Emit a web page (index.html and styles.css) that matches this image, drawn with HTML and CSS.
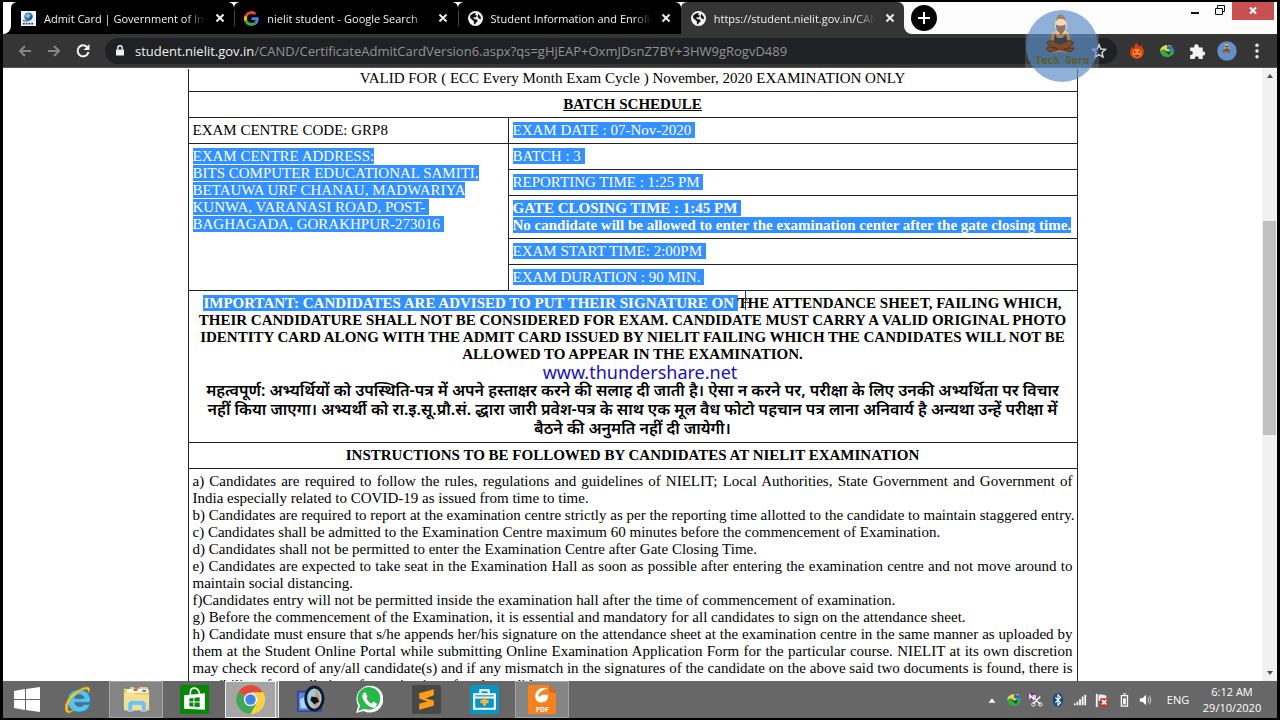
FILE: index.html
```html
<!DOCTYPE html>
<html lang="en">
<head>
<meta charset="utf-8">
<title>Admit Card</title>
<link rel="stylesheet" href="styles.css">
</head>
<body>
<svg class="defs" aria-hidden="true">
  <symbol id="globe" viewBox="0 0 14 14"><circle cx="7" cy="7" r="7" fill="#f4f4f4"/><path d="M2 4.500C3 3 5 1.500 7.500 1.800L6.500 3.500 8.500 4.500 7 6 5 5.800 5.500 7.500 8.500 8 9 9.500 7 11.500 6.500 12.500 5.500 12 5.500 9.500 2 6.500ZM9.500 2.500 12 5.500 11.800 8 10 7 9 5.500Z" fill="#111"/></symbol>
  <symbol id="idm" viewBox="0 0 16 14"><ellipse cx="8" cy="7" rx="7" ry="6" fill="#2b8fc0"/><path d="M1 6C3 1 9 0 13 2L10 7 4 8Z" fill="#efd548"/><path d="M8 1 14 3 12 6 8 5Z" fill="#3763b5"/><path d="M1 7 5 5 8 8 13 6 15 10 9 13 4 12Z" fill="#39a935"/><path d="M5 6 9 8 12 7 10 11Z" fill="#174c25"/></symbol>
  <symbol id="sage" viewBox="0 0 74 74"><circle cx="37" cy="37" r="36" fill="#6190ca"/><g transform="translate(6 2) scale(.8)"><path d="M26 28Q37 18 48 28L51 46 47 52H27L23 46Z" fill="#d9a467"/><path d="M30 27 35 42 43 28 48 46H27Z" fill="#77513f"/><path d="M30 20Q30 6 37 6T45 20L42 28H33Z" fill="#ecc9a6"/><path d="M31 17Q37 20 43 17L43 23 38 30 32 24Z" fill="#5a3c2e"/><path d="M31 13Q32 4 37 4T44 13L40 10H34Z" fill="#765039"/><path d="M20 39Q25 34 36 42 48 34 53 39L50 45 41 48 53 46Q56 47 49 51L36 48 24 51Q17 48 21 45L33 47 22 43Z" fill="#a5602a" stroke="#4c352c"/><path d="M29 31 34 34 41 33 45 31 43 40H31Z" fill="#374f70"/></g></symbol>
</svg>
<div class="window">
  <header class="tabstrip">
    <div class="lead"></div>
    <nav class="tabs">
      <div class="tab"><svg class="favicon" viewBox="0 0 16 16"><path fill="#eef3f7" d="M0 0h16v16H0z"/><circle cx="8" cy="6" r="4.500" fill="#2670a8"/><path d="M4 5 8 2 10 5 7 8Z" fill="#83bfd9"/><path d="M2 10q7 3 10-5" stroke="#254978" fill="none"/><path d="M2 13.500h12" stroke="#29435c" stroke-width="2" stroke-dasharray="2 1"/></svg><span class="title">Admit Card | Government of India</span><button class="x" aria-label="Close tab"></button></div>
      <div class="tab"><svg class="favicon" viewBox="0 0 48 48"><path fill="#ea4335" d="M24 9.500c3.500 0 6.700 1.200 9.200 3.600l6.900-6.900A24 24 0 0 0 2.600 13.200l8 6.200A14.300 14.300 0 0 1 24 9.500z"/><path fill="#4285f4" d="M47 24.600c0-1.600-.2-3.100-.4-4.600H24v9h12.900a11 11 0 0 1-4.700 7.200l7.700 6C44.400 38 47 31.900 47 24.600z"/><path fill="#fbbc05" d="M10.500 28.600a14.500 14.500 0 0 1 0-9.200l-8-6.200a24 24 0 0 0 0 21.600z"/><path fill="#34a853" d="M24 48c6.500 0 11.900-2.100 15.900-5.800l-7.700-6A14.300 14.300 0 0 1 10.500 28.600l-8 6.200A24 24 0 0 0 24 48z"/></svg><span class="title">nielit student - Google Search</span><button class="x" aria-label="Close tab"></button></div>
      <div class="tab"><svg class="favicon"><use href="#globe"/></svg><span class="title">Student Information and Enrollm</span><button class="x" aria-label="Close tab"></button></div>
      <div class="tab active"><svg class="favicon"><use href="#globe"/></svg><span class="title">https://student.nielit.gov.in/CAN</span><button class="x" aria-label="Close tab"></button></div>
    </nav>
    <div class="caption">
      <button class="newtab" aria-label="New tab"><svg viewBox="0 0 26 26"><circle cx="13" cy="13" r="13"/><path d="M13 7v12M7 13h12" stroke="#fff" stroke-width="2"/></svg></button>
      <div class="controls">
        <button aria-label="Minimize"><svg viewBox="0 0 24 18"><path d="M7 11h8" stroke="#111" stroke-width="2"/></svg></button>
        <button aria-label="Restore"><svg viewBox="0 0 24 18"><path d="M7.500 6.500h7v6h-7zM9.500 6V3.500h7v6H15" fill="none" stroke="#111"/></svg></button>
        <button class="close" aria-label="Close"><svg viewBox="0 0 42 18"><path d="m18 5.500 6 6m0-6-6 6" stroke="#fff" stroke-width="2"/></svg></button>
      </div>
    </div>
  </header>
  <div class="toolbar">
    <button aria-label="Back"><svg viewBox="0 0 16 16"><path d="M14 8H3m5-5L3 8l5 5" fill="none" stroke="#858585" stroke-width="2"/></svg></button>
    <button aria-label="Forward"><svg viewBox="0 0 16 16"><path d="M2 8h11M8 3l5 5-5 5" fill="none" stroke="#858585" stroke-width="2"/></svg></button>
    <button aria-label="Reload"><svg viewBox="0 0 16 16"><path d="M12.500 4.500A5.500 5.500 0 1 0 13.500 9" fill="none" stroke="#f4f4f4" stroke-width="2"/><path d="M14.500 1v6H8.500z" fill="#f4f4f4"/></svg></button>
    <div class="address">
      <svg class="lock" viewBox="0 0 10 12"><path d="M1 5h8v6H1z" fill="#eee"/><path d="M2.800 5V3.500a2.200 2.200 0 0 1 4.400 0V5" stroke="#eee" stroke-width="1.400" fill="none"/></svg>
      <div class="url"><b>student.nielit.gov.in</b>/CAND/CertificateAdmitCardVersion6.aspx?qs=gHjEAP+OxmJDsnZ7BY+3HW9gRogvD489</div>
      <button class="star" aria-label="Bookmark"><svg viewBox="0 0 14 14"><path d="m7 1.500 1.600 3.700 4 .4-3 2.700.9 4L7 10.200l-3.500 2.100.9-4-3-2.700 4-.4z" fill="none" stroke="#d5d5d5" stroke-width="1.300"/></svg></button>
    </div>
    <div class="extensions">
      <button aria-label="Flame"><svg viewBox="0 0 14 14"><path d="M7 0Q8 3 10 3L11 1Q11 4 13 6 14 13 7 14 0 13 1 7 1 5 3 3 3 5 5 4 4 1 7 0Z" fill="#d63b1e"/><ellipse cx="7" cy="9" rx="4" ry="4" fill="#ff8618"/><path d="M5 7v2m4-2v2m-4 2q2 1 4 0" stroke="#702308"/></svg></button>
      <button aria-label="Download manager"><svg><use href="#idm"/></svg></button>
      <button aria-label="Extensions"><svg viewBox="0 0 14 14"><path d="M1 4h3.500V3a2 2 0 0 1 4 0v1H12v3.500h.5a1.700 1.700 0 0 1 0 3.400H12V14H8.500v-.8a1.700 1.700 0 0 0-3.400 0v.8H1v-3.500h.7a1.700 1.700 0 0 0 0-3.400H1z" fill="#f6f6f6"/></svg></button>
      <button aria-label="Profile"><svg class="avatar"><use href="#sage"/></svg></button>
      <button aria-label="Menu"><svg viewBox="0 0 14 14"><circle cx="7" cy="2" r="1.500" fill="#eee"/><circle cx="7" cy="7" r="1.500" fill="#eee"/><circle cx="7" cy="12" r="1.500" fill="#eee"/></svg></button>
    </div>
  </div>
  <div class="viewport">
    <main>
      <table>
        <colgroup><col class="col-left"><col></colgroup>
        <tbody>
        <tr><td colspan="2" class="center">VALID FOR ( ECC Every Month Exam Cycle ) November, 2020 EXAMINATION ONLY</td></tr>
        <tr><th colspan="2"><u>BATCH SCHEDULE</u></th></tr>
        <tr><td>EXAM CENTRE CODE: GRP8</td><td><mark>EXAM DATE : 07-Nov-2020&nbsp;</mark></td></tr>
        <tr><td rowspan="5"><mark>EXAM CENTRE ADDRESS:<br>BITS COMPUTER EDUCATIONAL SAMITI,<br>BETAUWA URF CHANAU, MADWARIYA<br>KUNWA, VARANASI ROAD, POST-&nbsp;<br>BAGHAGADA, GORAKHPUR-273016&nbsp;</mark></td><td><mark>BATCH : 3&nbsp;</mark></td></tr>
        <tr><td><mark>REPORTING TIME : 1:25 PM&nbsp;</mark></td></tr>
        <tr><td><mark><b>GATE CLOSING TIME : 1:45 PM&nbsp;<br>No candidate will be allowed to enter the examination center after the gate closing time.</b></mark></td></tr>
        <tr><td><mark>EXAM START TIME: 2:00PM&nbsp;</mark></td></tr>
        <tr><td><mark>EXAM DURATION : 90 MIN.&nbsp;</mark></td></tr>
        <tr><th colspan="2">
          <p><mark>IMPORTANT: CANDIDATES ARE ADVISED TO PUT THEIR SIGNATURE ON </mark><span class="caret-host">T<svg class="ibeam" viewBox="0 0 7 20"><path d="M3.500 0v20M0 12.500h7" stroke="#333"/></svg></span>HE ATTENDANCE SHEET, FAILING WHICH,<br>THEIR CANDIDATURE SHALL NOT BE CONSIDERED FOR EXAM. CANDIDATE MUST CARRY A VALID ORIGINAL PHOTO<br>IDENTITY CARD ALONG WITH THE ADMIT CARD ISSUED BY NIELIT FAILING WHICH THE CANDIDATES WILL NOT BE<br>ALLOWED TO APPEAR IN THE EXAMINATION.</p>
          <p class="site">www.thundershare.net</p>
          <p class="hindi" lang="hi">महत्वपूर्ण: अभ्यर्थियों को उपस्थिति-पत्र में अपने हस्ताक्षर करने की सलाह दी जाती है। ऐसा न करने पर, परीक्षा के लिए उनकी अभ्यर्थिता पर विचार<br>नहीं किया जाएगा। अभ्यर्थी को रा.इ.सू.प्रौ.सं. द्धारा जारी प्रवेश-पत्र के साथ एक मूल वैध फोटो पहचान पत्र लाना अनिवार्य है अन्यथा उन्हें परीक्षा में<br>बैठने की अनुमति नहीं दी जायेगी।</p>
        </th></tr>
        <tr><th colspan="2">INSTRUCTIONS TO BE FOLLOWED BY CANDIDATES AT NIELIT EXAMINATION</th></tr>
        <tr><td colspan="2" class="rules">
          <p>a) Candidates are required to follow the rules, regulations and guidelines of NIELIT; Local Authorities, State Government and Government of India especially related to COVID-19 as issued from time to time.</p>
          <p class="single">b) Candidates are required to report at the examination centre strictly as per the reporting time allotted to the candidate to maintain staggered entry.</p>
          <p>c) Candidates shall be admitted to the Examination Centre maximum 60 minutes before the commencement of Examination.</p>
          <p>d) Candidates shall not be permitted to enter the Examination Centre after Gate Closing Time.</p>
          <p>e) Candidates are expected to take seat in the Examination Hall as soon as possible after entering the examination centre and not move around to maintain social distancing.</p>
          <p>f)Candidates entry will not be permitted inside the examination hall after the time of commencement of examination.</p>
          <p>g) Before the commencement of the Examination, it is essential and mandatory for all candidates to sign on the attendance sheet.</p>
          <p>h) Candidate must ensure that s/he appends her/his signature on the attendance sheet at the examination centre in the same manner as uploaded by them at the Student Online Portal while submitting Online Examination Application Form for the particular course. NIELIT at its own discretion may check record of any/all candidate(s) and if any mismatch in the signatures of the candidate on the above said two documents is found, there is possibility of cancellation of examination of such candidate.</p>
        </td></tr>
        </tbody>
      </table>
    </main>
    <div class="scrollbar"><i class="arrow up"></i><i class="above"></i><i class="thumb"></i><i class="below"></i><i class="arrow down"></i></div>
  </div>
  <footer class="taskbar">
    <button class="start" aria-label="Start"><svg viewBox="0 0 26 26"><path d="M0 4 11 2v10H0zM12 2 26 0v12H12zM0 13h11v10L0 21zM12 13h14v12l-14-2z" fill="#fff"/></svg></button>
    <div class="apps">
      <button aria-label="Internet Explorer"><svg viewBox="0 0 30 30"><path fill-rule="evenodd" d="M27 18H11c1 5 7 6 10 2h6c-2 6-7 8-11 8C8 28 4 23 4 16S9 5 16 5s12 5 11 13zm-6-4c-1-5-9-6-10 0z" fill="#55c4f0" stroke="#2588bd"/><path d="M25 8c4-6-1-8-9-3C6 9-1 21 2 27c2 4 7 0 9-2-3 2-6 3-7 1C2 20 9 11 16 7c6-4 10-4 9 1z" fill="#f6cf43" stroke="#d8a51b"/></svg></button>
      <button class="open" aria-label="File Explorer"><svg viewBox="0 0 30 30"><path d="M2 4 6 2h6l2 2h4V2h8l2 4v20H2z" fill="#edc967"/><path d="M5 4h22v4H5z" fill="#f7f7ee"/><path d="M4 3h4" stroke-width="2" stroke="#3d9b45"/><path d="M12 5h4" stroke-width="2" stroke="#d44636"/><path d="M21 6h4" stroke-width="2" stroke="#3d82c4"/><path d="M2 8h10l3 2h13v16H2z" fill="#f6df8d"/><path d="M6 27v-8l3-3h13l3 3v8h-5v-6h-9v6z" fill="#79bee4" stroke="#b8e6f8"/></svg></button>
      <button aria-label="Store"><svg viewBox="0 0 28 28"><path d="M0 0h28v28H0z" fill="#078707"/><path d="M4 10 24 8v16L4 23z" fill="#fff"/><path d="M10 10V7q0-4 4-4t5 6" fill="none" stroke="#fff" stroke-width="1.500"/><path d="m9 13 4-.5V16H9zm5-.7 5-.5V16h-5zM9 17h4v4l-4-.5zm5 0h5v4.500l-5-.4z" fill="#078707"/></svg></button>
      <button class="open current" aria-label="Chrome"><svg viewBox="0 0 28 28"><circle cx="14" cy="14" r="14" fill="#fbd047"/><path d="M14 14 1.900 7A14 14 0 0 1 26.100 7z" fill="#df4b3f"/><path d="M14 14 1.900 7A14 14 0 0 0 14 28l6-10.500z" fill="#3fa65a"/><path d="M14 7h12.100A14 14 0 0 1 14 28l6-10.500z" fill="#fbd047"/><circle cx="14" cy="14" r="6.500" fill="#f4f4f4"/><circle cx="14" cy="14" r="5" fill="#4285e8"/></svg></button>
      <button aria-label="Photo viewer"><svg viewBox="0 0 30 30"><path d="M2 7h24v20H2z" fill="#6684d3" stroke="#3449a3" stroke-width="2"/><path d="M4 15 14 9v15H5z" fill="#a7d8f1"/><ellipse cx="19" cy="14" rx="9" ry="12" fill="#9bcce2" stroke="#101b2b" stroke-width="3"/><path d="M20 4q9 10 1 20L17 20 20 17 15 14 20 11z" fill="#d49b72"/><path d="m16 12 6 1 2 4-5 3-4-4z" fill="#111"/></svg></button>
      <button aria-label="WhatsApp"><svg viewBox="0 0 28 28"><path d="M2 27 4 20A13 13 0 1 1 9 25z" fill="#fff"/><path d="M4 25 6 20A11 11 0 1 1 10 23z" fill="#29b74a"/><path d="m9 8 2-1 2 4-1 2q2 4 5 5l2-2 3 2q0 4-4 4Q11 20 8 12q0-3 1-4z" fill="#fff"/></svg></button>
      <button aria-label="Sublime Text"><svg viewBox="0 0 28 28"><rect width="28" height="28" rx="2" fill="#484848"/><path d="M7 8 21 4v6l-8 3 8 2v5L7 24v-6l8-2-8-3z" fill="#ff9d16"/></svg></button>
      <button aria-label="Toolkit"><svg viewBox="0 0 28 28"><rect width="28" height="28" rx="3" fill="#0796c4"/><path d="M4 9h20v14H4zM4 12h20M10 8V5h8v3" fill="none" stroke="#fff" stroke-width="2"/><path d="M14 12v8M10 16h8" stroke="#f6b13c" stroke-width="3"/></svg></button>
      <button class="open" aria-label="PDF reader"><svg viewBox="0 0 30 30"><path d="M0 0h21l8 8v22H0z" fill="#f58220"/><path d="M22 0 30 8h-8z" fill="#db651f"/><path d="M21 4Q12 1 8 8q-2 9 5 10 8 0 8-8h-7q-1 2-4 2 2-7 11-8z" fill="#fff"/><text x="8" y="28" class="pdf">PDF</text></svg></button>
    </div>
    <div class="tray">
      <svg viewBox="0 0 16 16"><path d="m4 11 4-5 4 5z" fill="#fff"/></svg>
      <svg><use href="#idm"/></svg>
      <svg viewBox="0 0 16 16"><path d="M0 0h8v8H0z" fill="#84258c"/><path d="M1 7V2l4 5V2m2 0v5M5 5l8 8m0-9-8 8" stroke="#fff" stroke-width="1.500" fill="none"/><circle cx="5" cy="13" r="2" fill="none" stroke="#fff"/><circle cx="13" cy="13" r="2" fill="none" stroke="#fff"/></svg>
      <svg viewBox="0 0 16 16"><ellipse cx="8" cy="8" rx="6" ry="8" fill="#174a83"/><path d="m5 5 6 6-3 3V2l3 3-6 6" fill="none" stroke="#fff" stroke-width="1.300"/></svg>
      <svg viewBox="0 0 16 16"><path d="M2 14v-2m3 2v-4m3 4V7m3 7V4m3 10V2" stroke="#fff" stroke-width="2"/></svg>
      <svg viewBox="0 0 16 16"><path d="M2 1v15" stroke="#fff" stroke-width="2"/><path d="M4 2q4-1 9 1v7q-5-2-9-1z" fill="#eee"/><path d="M6 6h9v10H6z" fill="#c23a32"/><path d="m8 8 5 5m0-5-5 5" stroke="#fff" stroke-width="2"/></svg>
      <svg viewBox="0 0 16 16"><path d="M5 3h7v12H5zM7 1h3" stroke="#fff" stroke-width="1.500" fill="none"/><path d="M7 6h3v7H7z" fill="#fff"/></svg>
      <svg viewBox="0 0 16 16"><path d="M1 6h3l4-4v12l-4-4H1z" fill="#fff"/><path d="M10 5q2 3 0 6m2-8q3 5 0 10" fill="none" stroke="#ddd"/></svg>
      <span class="lang">ENG</span>
      <time>6:12 AM<br>29/10/2020</time>
    </div>
  </footer>
  <div class="watermark"><svg><use href="#sage"/></svg><span>Tech Guru</span></div>
</div>
</body>
</html>
```
FILE: styles.css
```css
* { box-sizing: border-box; }
body { margin: 0; background: #000; }
p { margin: 0; }
button { padding: 0; border: 0; background: none; display: flex; align-items: center; justify-content: center; }
.defs { position: absolute; width: 0; height: 0; }
.window { position: relative; display: flex; flex-direction: column; height: 100vh; padding: 2px 3px; overflow: hidden; font-family: "Open Sans", "Noto Sans", sans-serif; }

.tabstrip { display: flex; flex: none; height: 32px; background: linear-gradient(90deg, #000 50%, #353535 50%); }
.lead { width: 8px; background: #fff; border-radius: 0 0 8px 0; }
.tabs { display: flex; flex: 0 1 893px; min-width: 0; background: linear-gradient(#fff 0 10px, #000 10px); }
.tab { position: relative; display: flex; flex: 1 1 0; min-width: 0; align-items: center; gap: 8px; padding: 0 8px 0 10px; background: #000; border-radius: 6px 6px 0 0; color: #f1f1f1; font-size: 11px; }
.tab + .tab::before { content: ""; position: absolute; left: 0; top: 8px; height: 17px; border-left: 1px solid #444; }
.tab.active { background: #353535; }
.tab.active::before { display: none; }
.favicon { flex: none; width: 15px; height: 15px; }
.title { flex: 1; min-width: 0; overflow: hidden; white-space: nowrap; mask-image: linear-gradient(90deg, #000 88%, transparent); }
.x { position: relative; width: 13px; height: 13px; }
.x::before, .x::after { content: ""; position: absolute; width: 10px; height: 2px; background: #eee; transform: rotate(45deg); }
.x::after { transform: rotate(-45deg); }
.caption { display: flex; flex: 1; justify-content: space-between; padding: 0 3px 0 7px; background: #fcfcfc; border-radius: 0 0 0 8px; }
.newtab { width: 26px; height: 31px; }
.newtab svg { width: 26px; height: 26px; }
.controls { display: flex; height: 18px; }
.controls button { width: 24px; }
.controls svg { height: 18px; }
.controls .close { width: 42px; background: #c75050; }

.toolbar { display: flex; flex: none; align-items: center; height: 34px; padding: 0 5px 0 7px; background: #353535; border-bottom: 1px solid #555; }
.toolbar > button { width: 29px; height: 28px; }
.toolbar svg { width: 16px; height: 16px; }
.address { display: flex; flex: 1; align-items: center; height: 26px; margin-left: 8px; padding: 0 10px; background: #202124; border-radius: 13px; }
.toolbar .lock { width: 10px; height: 13px; }
.url { flex: 1; margin-left: 10px; color: #929497; font-size: 13px; white-space: nowrap; overflow: hidden; }
.url b { color: #f1f1f1; font-weight: 400; }
.extensions { display: flex; margin-left: 5px; }
.extensions button { width: 30px; height: 28px; }
.toolbar .avatar { width: 20px; height: 20px; }

.viewport { display: flex; flex: 1; min-height: 0; background: #fff; }
main { flex: 1; min-width: 0; overflow: hidden; padding-top: 1px; font-family: "Liberation Serif", serif; }
table { width: 100%; max-width: 890px; margin: 0 auto; border-collapse: collapse; table-layout: fixed; color: #000; font-size: 15px; line-height: 17px; }
.col-left { width: 36%; }
td, th { padding: 4px; border: 1px solid #222; vertical-align: top; text-align: left; }
th { text-align: center; }
tr:first-child td { padding-top: 1px; border-top: 0; }
.center, td.center { text-align: center; }
mark { background: #3390ff; color: #fff; }
.rules { text-align: justify; }
.single { white-space: nowrap; }
.caret-host { position: relative; }
.ibeam { position: absolute; left: 4px; top: -5px; width: 7px; height: 20px; }
.site { padding-left: 15px; color: #1b12b4; font: 400 18px/18px "Noto Sans", sans-serif; }
.hindi { font: 600 16px/19px "Noto Sans", "Noto Sans Devanagari", sans-serif; white-space: nowrap; }
.scrollbar { display: flex; flex-direction: column; width: 15px; padding: 0 1px; background: #f1f1f1; }
.arrow { height: 16px; display: flex; align-items: center; justify-content: center; }
.arrow::before { content: ""; border: 3px solid transparent; border-top: 0; border-bottom: 4px solid #505050; }
.arrow.down::before { transform: rotate(180deg); }
.above { flex: 137; }
.thumb { flex: 214; background: #c1c1c1; }
.below { flex: 230; }

.taskbar { display: flex; flex: none; height: 37px; background: #676767; }
.start { width: 48px; }
.start svg { width: 26px; height: 26px; }
.apps { display: flex; flex: 1; gap: 4px; }
.apps button { width: 54px; }
.apps svg { width: 29px; height: 29px; }
.apps .open { background: #858585; border: 1px solid #a5a5a5; }
.apps .current { background: #a5a5a5; border: 1px solid #eee; border-right: 4px double #eee; }
.pdf { fill: #fff; font: 700 7px "Open Sans", sans-serif; }
.tray { display: flex; align-items: center; padding-right: 12px; color: #fff; font-size: 11px; }
.tray svg { width: 16px; height: 14px; margin: 0 3px; }
.lang { width: 42px; text-align: center; }
time { width: 66px; text-align: center; line-height: 16px; }

/* channel badge floating over the toolbar */
.watermark { position: absolute; top: 9px; right: 181px; width: 74px; height: 74px; opacity: .7; background: linear-gradient(transparent 25px, rgba(255, 255, 255, .2) 25px 59px, transparent 59px); }
.watermark svg { width: 74px; height: 74px; }
.watermark span { position: absolute; left: 0; right: 0; bottom: 15px; text-align: center; color: #77791a; font: 700 10px/14px "DejaVu Sans Mono", monospace; white-space: nowrap; }
```
